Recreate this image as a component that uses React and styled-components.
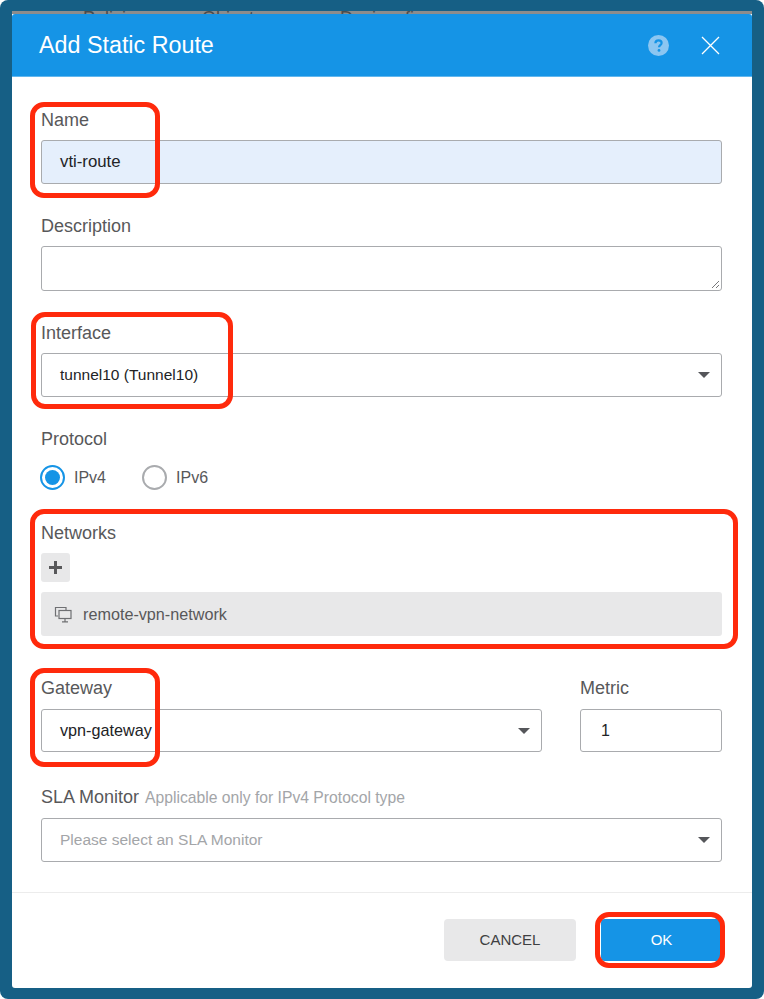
import React from "react";
import styled, { createGlobalStyle } from "styled-components";

const Global = createGlobalStyle`
  html, body {
    margin: 0;
    padding: 0;
    background: #ffffff;
  }
  * {
    box-sizing: border-box;
  }
`;

const Frame = styled.div`
  position: relative;
  width: 764px;
  height: 999px;
  padding: 11px 12px 11px 12px;
  background: #165f85;
  border-radius: 8px;
  font-family: "Liberation Sans", Arial, sans-serif;
  display: flex;
  flex-direction: column;
`;

// the page behind the dialog, only the top of its tabs peeks out
const BackStrip = styled.div`
  height: 3px;
  flex: none;
  padding-left: 71px;
  display: flex;
  gap: 57px;
  overflow: hidden;
  background: #8c8c8c;
`;

const BackTab = styled.span`
  font-size: 18px;
  line-height: 14px;
  color: #4a4a4a;
  white-space: nowrap;
  &:last-child {
    margin-left: 20px;
  }
`;

const Modal = styled.div`
  flex: 1;
  display: flex;
  flex-direction: column;
  background: #ffffff;
  border-radius: 0 0 3px 3px;
`;

const Header = styled.header`
  height: 63px;
  flex: none;
  padding: 0 32px 0 27px;
  display: flex;
  align-items: center;
  justify-content: space-between;
  background: #1594e6;
  border-bottom: 1px solid #62b7ee;
  border-radius: 3px 3px 0 0;
`;

const Title = styled.h1`
  margin: 0;
  font-size: 23.3px;
  font-weight: 400;
  color: #ffffff;
`;

const HeaderIcons = styled.div`
  display: flex;
  align-items: center;
  gap: 32px;
`;

const Form = styled.div`
  flex: 1;
  padding: 33px 30px 0 29px;
  display: flex;
  flex-direction: column;
`;

const Field = styled.div`
  display: flex;
  flex-direction: column;
  flex: ${(p) => p.$flex || "none"};
  margin-bottom: ${(p) => p.$gap ?? 32}px;
`;

const Label = styled.label`
  font-size: 18px;
  line-height: 20px;
  color: #58585a;
  margin-bottom: 10px;
  white-space: nowrap;
`;

const Hint = styled.span`
  font-size: 15.7px;
  color: #a3a5a8;
  margin-left: 6px;
`;

const TextBox = styled.div`
  position: relative;
  height: ${(p) => p.$h || 44}px;
  margin-top: ${(p) => p.$top || 0}px;
  padding-left: ${(p) => p.$pad || 18}px;
  display: flex;
  align-items: center;
  font-size: ${(p) => p.$size || 16}px;
  color: ${(p) => (p.$muted ? "#a3a5a8" : "#222326")};
  background: ${(p) => (p.$filled ? "#e5effc" : "#ffffff")};
  border: 1px solid #a9abae;
  border-radius: 3px;
`;

const Caret = styled.span`
  position: absolute;
  right: 11px;
  top: 50%;
  margin-top: -3px;
  border-left: 6px solid transparent;
  border-right: 6px solid transparent;
  border-top: 6px solid #55565a;
`;

const Grip = styled.svg`
  position: absolute;
  right: 1px;
  bottom: 1px;
`;

const RadioRow = styled.div`
  display: flex;
  align-items: center;
  gap: 36px;
  margin: 6px 0 0 -1px;
`;

const RadioItem = styled.div`
  display: flex;
  align-items: center;
  gap: 9px;
  font-size: 16px;
  color: #58585a;
`;

const RadioDot = styled.span`
  width: 25px;
  height: 25px;
  border-radius: 50%;
  border: 2px solid ${(p) => (p.$on ? "#1594e6" : "#a9abae")};
  display: flex;
  align-items: center;
  justify-content: center;
  &::after {
    content: "";
    display: ${(p) => (p.$on ? "block" : "none")};
    width: 15px;
    height: 15px;
    border-radius: 50%;
    background: #1594e6;
  }
`;

const AddButton = styled.button`
  width: 29px;
  height: 29px;
  padding: 0;
  border: none;
  border-radius: 3px;
  background: #e8e8e9;
  display: flex;
  align-items: center;
  justify-content: center;
  margin-bottom: 10px;
`;

const NetworkRow = styled.div`
  height: 44px;
  padding-left: 13px;
  display: flex;
  align-items: center;
  gap: 11px;
  font-size: 16.2px;
  color: #58585a;
  background: #e8e8e9;
  border-radius: 3px;
`;

const Row = styled.div`
  display: flex;
  gap: 38px;
`;

const Footer = styled.footer`
  flex: none;
  height: 96px;
  padding: 26px 32px 0 0;
  display: flex;
  justify-content: flex-end;
  gap: 25px;
  border-top: 1px solid #ececec;
`;

const Button = styled.button`
  width: ${(p) => p.$w}px;
  height: 42px;
  padding: 0 0 2px ${(p) => (p.$primary ? 2 : 0)}px;
  border: none;
  border-radius: 4px;
  font-family: inherit;
  font-size: 15px;
  color: ${(p) => (p.$primary ? "#ffffff" : "#3e3f42")};
  background: ${(p) => (p.$primary ? "#1594e6" : "#e8e8e9")};
`;

const Callout = styled.div`
  position: absolute;
  left: ${(p) => p.$x}px;
  top: ${(p) => p.$y}px;
  width: ${(p) => p.$w}px;
  height: ${(p) => p.$h}px;
  border: 5px solid #ff2a0c;
  border-radius: 14px;
  pointer-events: none;
`;

const callouts = [
  { x: 30, y: 102, w: 130, h: 96 },
  { x: 31, y: 312, w: 202, h: 97 },
  { x: 30, y: 509, w: 708, h: 140 },
  { x: 30, y: 668, w: 130, h: 99 },
  { x: 595, y: 912, w: 130, h: 56 },
];

export default function App() {
  return (
    <>
      <Global />
      <Frame>
        <BackStrip>
          <BackTab>Policies</BackTab>
          <BackTab>Objects</BackTab>
          <BackTab>Device: firepower</BackTab>
        </BackStrip>
        <Modal>
          <Header>
            <Title>Add Static Route</Title>
            <HeaderIcons>
              <svg width="21" height="21" viewBox="0 0 21 21">
                <circle cx="10.5" cy="10.5" r="10.5" fill="#8cc6f1" />
                <path
                  d="M7.4 8.2c0-1.8 1.4-2.9 3.2-2.9s3 1 3 2.6c0 2.2-2.6 2.3-2.6 4.4"
                  fill="none"
                  stroke="#1594e6"
                  strokeWidth="2.2"
                />
                <circle cx="11" cy="15.4" r="1.4" fill="#1594e6" />
              </svg>
              <svg width="19" height="19" viewBox="0 0 19 19">
                <path d="M1 1l17 17M18 1L1 18" stroke="#fff" strokeWidth="1.3" fill="none" />
              </svg>
            </HeaderIcons>
          </Header>
          <Form>
            <Field>
              <Label>Name</Label>
              <TextBox $filled $size={16.8}>
                vti-route
              </TextBox>
            </Field>
            <Field>
              <Label>Description</Label>
              <TextBox $h={45}>
                <Grip width="10" height="10" viewBox="0 0 10 10">
                  <path d="M9 2L2 9M9 6L6 9" stroke="#77787a" strokeWidth="1" />
                </Grip>
              </TextBox>
            </Field>
            <Field>
              <Label>Interface</Label>
              <TextBox $size={15.5}>
                tunnel10 (Tunnel10)
                <Caret />
              </TextBox>
            </Field>
            <Field $gap={33}>
              <Label>Protocol</Label>
              <RadioRow>
                <RadioItem>
                  <RadioDot $on />
                  IPv4
                </RadioItem>
                <RadioItem>
                  <RadioDot />
                  IPv6
                </RadioItem>
              </RadioRow>
            </Field>
            <Field $gap={42}>
              <Label>Networks</Label>
              <AddButton aria-label="Add network">
                <svg width="13" height="13" viewBox="0 0 13 13">
                  <path d="M6.5 0v13M0 6.5h13" stroke="#58585a" strokeWidth="3" />
                </svg>
              </AddButton>
              <NetworkRow>
                <svg width="18" height="17" viewBox="0 0 18 17" fill="none" stroke="#6f7073" strokeWidth="1.2">
                  <path d="M4 10H1.5V1.5H12V4" />
                  <rect x="5" y="4.5" width="12" height="8" fill="#e8e8e9" />
                  <path d="M11 12.5v3M8 15.8h6" />
                </svg>
                remote-vpn-network
              </NetworkRow>
            </Field>
            <Row>
              <Field $flex="1" $gap={35}>
                <Label>Gateway</Label>
                <TextBox $size={16.2} $h={43} $top={1}>
                  vpn-gateway
                  <Caret />
                </TextBox>
              </Field>
              <Field $flex="0 0 142px" $gap={35}>
                <Label>Metric</Label>
                <TextBox $pad={20} $h={43} $top={1}>
                  1
                </TextBox>
              </Field>
            </Row>
            <Field $gap={0}>
              <Label>
                SLA Monitor<Hint>Applicable only for IPv4 Protocol type</Hint>
              </Label>
              <TextBox $muted $size={15.5}>
                Please select an SLA Monitor
                <Caret />
              </TextBox>
            </Field>
          </Form>
          <Footer>
            <Button $w={132}>CANCEL</Button>
            <Button $w={119} $primary>
              OK
            </Button>
          </Footer>
        </Modal>
        {callouts.map((c) => (
          <Callout key={c.y} $x={c.x} $y={c.y} $w={c.w} $h={c.h} />
        ))}
      </Frame>
    </>
  );
}
